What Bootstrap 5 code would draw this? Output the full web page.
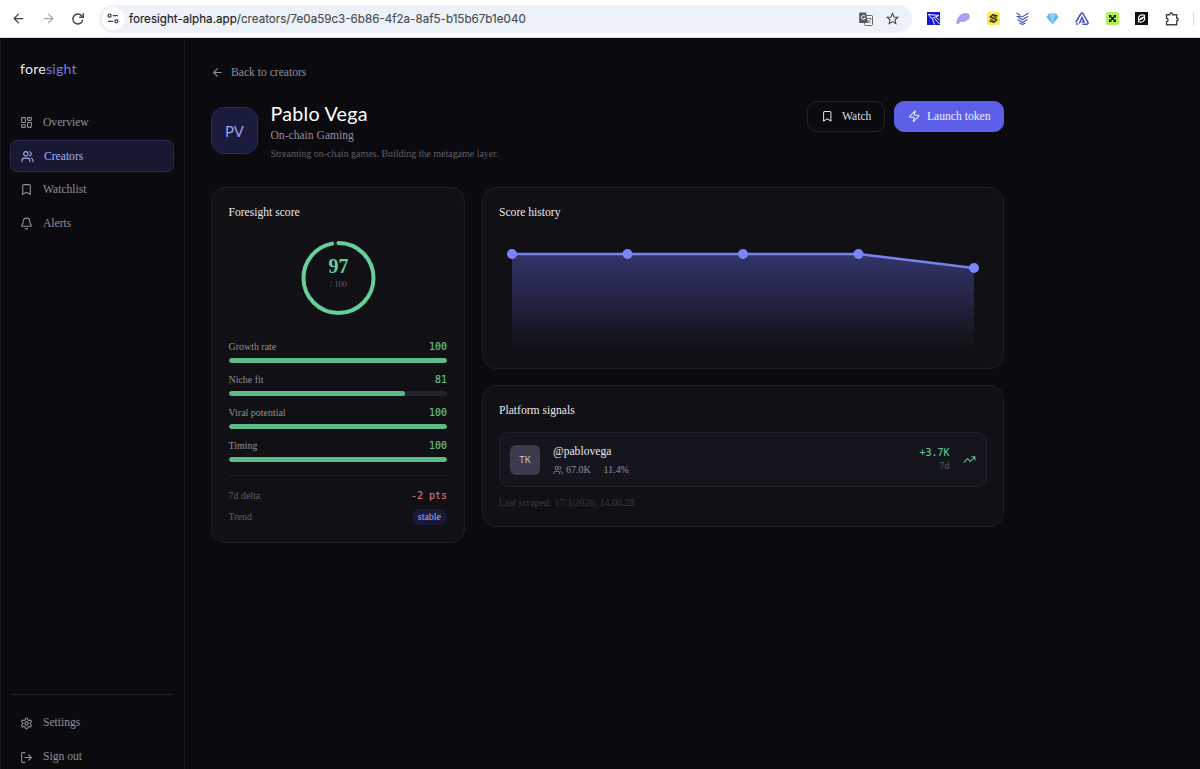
<!DOCTYPE html>
<html lang="en">
<head>
<meta charset="utf-8">
<title>Foresight – Pablo Vega</title>
<link href="https://cdn.jsdelivr.net/npm/bootstrap@5.3.0/dist/css/bootstrap.min.css" rel="stylesheet">
<style>
:root{--line:#1d1d22;--mut:#8f8f99;--dim:#5f5f69;--ind:#818cf8;--grn:#5fc48e}
body{background:#0b0b0f;color:#e8e8ec;font:11.6px/16px "Liberation Serif",serif;height:769px;overflow:hidden}
svg{display:block;flex:none}
.ico{fill:none;stroke:currentColor;stroke-width:2;stroke-linecap:round;stroke-linejoin:round}
.geo{font-family:Lato,"Open Sans",sans-serif}
.mono{font-family:"DejaVu Sans Mono","Liberation Mono",monospace;font-size:9.95px;-webkit-text-stroke:.15px}
.chrome{height:38px;background:#fff;border-bottom:1px solid #d5d7da;color:#474747;padding-left:11px}
.omni{width:813px;height:28px;border-radius:14px;background:#edf1f8;margin-left:14px;padding:0 13px 0 3px}
.tune{width:23px;height:23px;border-radius:50%;background:#fff}
.url{font:11.63px/16px Inter,sans-serif;color:#4a4c50;margin-left:4.5px;-webkit-text-stroke:.15px}
.url b{font-weight:400;color:#1f2023}
.exts{gap:16.5px;margin-left:15px}
.shell{height:731px}
.side{width:185px;border-right:1px solid #17171b;border-left:1px solid #17171b;padding:0 10px 0 9px}
.brand{font-size:14.2px;line-height:18px;margin:22px 0 0 10px;letter-spacing:.2px}
.brand span{color:#7379e0}
.side .nav-link{height:32px;border:1px solid transparent;border-radius:7px;padding:1px 9px 0;gap:10px;color:var(--mut);display:flex;align-items:center}
.side .nav-link.active{background:#181930;border-color:#272950;color:#a3adf9;padding-left:10px}
.side .nav{gap:1.7px;margin-top:28px}
.side .nav span{padding-top:1px}
.foot{border-top:1px solid var(--line);padding-top:11px;height:75px;gap:1px}
.foot .nav-link{height:33px;flex:none}
.content{width:793px;margin-left:26px;padding-top:27px}
.muted{color:var(--mut)}.dimmed{color:var(--dim)}
.small-t{font-size:9.95px}
.avatar{width:47px;height:47px;border-radius:13px;background:#1b1b3d;border:1px solid #2b2c58;color:#9aa2f5;font-size:14.8px}
.name{font-size:19.7px;line-height:24px;color:#fff;letter-spacing:.25px}
.act{font-size:11.6px;line-height:16px;border-radius:10px;padding:0;height:31px;gap:9px;border-width:1px}
.act.watch{width:78px;border-color:#232329;color:#dcdce2}
.act.launch{width:110px;background:#5d5fe9;border-color:#5d5fe9;color:#eeeefe}
.panel{background:#111115;border:1px solid var(--line);border-radius:14px;padding:17px 16.5px}
.meter{height:5px;border-radius:3px;background:#24242e}
.meter .progress-bar{background:#5dbc8a;border-radius:3px}
.metric{height:33px}
.grn{color:var(--grn)}
.stable{background:#1a1a38;color:#a3adf9;border-radius:8px;padding:0 6px;height:16px}
.signal{height:55px;border:1px solid #1f2028;border-radius:9px;background:#15161d;padding:0 10px 0 10px}
.tk{width:30px;height:30px;border-radius:6px;background:#3c3a4c;color:#b9b8c5;font:500 9px/30px Inter,sans-serif;text-align:center}
</style>
</head>
<body>
<svg width="0" height="0" class="position-absolute">
<symbol id="i-left" viewBox="0 0 24 24"><path d="m12 19-7-7 7-7M19 12H5"/></symbol>
<symbol id="i-users" viewBox="0 0 24 24"><path d="M16 21v-2a4 4 0 0 0-4-4H6a4 4 0 0 0-4 4v2"/><circle cx="9" cy="7" r="4"/><path d="M22 21v-2a4 4 0 0 0-3-3.870M16 3.130a4 4 0 0 1 0 7.750"/></symbol>
<symbol id="i-mark" viewBox="0 0 24 24"><path d="m19 21-7-4-7 4V5a2 2 0 0 1 2-2h10a2 2 0 0 1 2 2z"/></symbol>
</svg>

<header class="chrome d-flex align-items-center">
  <svg class="ico" width="15" height="15" style="color:#444"><use href="#i-left"/></svg>
  <svg class="ico" width="15" height="15" viewBox="0 0 24 24" style="color:#a9a9a9;margin-left:15px"><path d="M5 12h14M12 5l7 7-7 7"/></svg>
  <svg class="ico" width="14" height="14" viewBox="0 0 24 24" style="color:#444;margin-left:14.500px;stroke-width:2.400"><path d="M20 14a8.500 8.500 0 1 1-1.800-7.500L21 9"/><path d="M21 3v6h-6"/></svg>
  <div class="omni d-flex align-items-center">
    <div class="tune d-flex align-items-center justify-content-center">
      <svg width="12" height="11" viewBox="0 0 12 11" fill="none" stroke="#444" stroke-width="1.300"><circle cx="2.600" cy="2.700" r="1.500"/><path d="M5.800 2.700h5M1 8.300h5"/><circle cx="9.400" cy="8.300" r="1.500"/></svg>
    </div>
    <div class="url"><b>foresight-alpha.app</b>/creators/7e0a59c3-6b86-4f2a-8af5-b15b67b1e040</div>
    <div class="ms-auto d-flex align-items-center" style="gap:13px">
      <svg width="14" height="14" viewBox="0 0 14 14"><rect x="5.500" y="3.500" width="8" height="10" rx="1" fill="#fff" stroke="#666"/><path d="M7.500 6.500h5M10 5.500v1M12 6.500c-.6 2-2 3.500-3.500 4.500M8.500 8c.8 1.500 2 2.600 3.500 3.300" stroke="#666" stroke-width=".8" fill="none"/><path d="M1 .5h6L9 11H1a.8.8 0 0 1-.8-.8V1.300A.8.800 0 0 1 1 .5z" fill="#55585c"/><path d="M6 4.200A2 2 0 1 0 6.300 6H4.500" stroke="#fff" fill="none"/></svg>
      <svg width="13" height="13" viewBox="0 0 24 24" class="ico" style="color:#444;stroke-linejoin:miter"><path d="m12 2.500 2.900 6.600 7.100.6-5.400 4.700 1.600 7-6.200-3.700-6.200 3.700 1.600-7L2 9.700l7.100-.6z"/></svg>
    </div>
  </div>
  <div class="exts d-flex align-items-center">
    <svg width="13" height="13" viewBox="0 0 13 13"><path d="M0 0h13v13H0z" fill="#1517d8"/><path d="M1.500 2.500 12 3.500 4.500 6.500zM5.500 7l2 5.500M7.500 6.500l5 5.500M9 5.500l3.500 2.500" stroke="#fff" stroke-width="1" fill="none"/></svg>
    <svg width="14" height="13" viewBox="0 0 14 13"><path d="M.3 11C1 5 4.500 1.300 9.500 1c3-.1 4.600 1.600 4.300 4-.3 2.300-1.800 3.500-3.500 3.200-.6 2-2 1.800-2.500.5-.7 1.800-2 2.200-2.800.6C4 11 2.500 12.500.8 12z" fill="#ab9fee"/></svg>
    <svg width="13" height="13" viewBox="0 0 13 13"><rect width="13" height="13" rx="2.500" fill="#fce94b"/><path d="M10.300 3.800 6 2.800 3.300 4.800 9.700 8 7 10.200 2.700 9.200M10 5.500 6.500 4.500M3 7.500l3.500 1" stroke="#222" stroke-width="1.300" fill="none"/></svg>
    <svg width="13" height="13" viewBox="0 0 13 13" fill="none" stroke="#4355bd" stroke-width="1.100"><path d="m.5 1 4 2.500M12.500 1l-6 3.800L.5 4.500M.8 4.200l5.700 3.600 5.700-3.600M1.500 7.500l5 3 5-3M3.500 11l3 1.500 3-1.500"/></svg>
    <svg width="13" height="13" viewBox="0 0 13 13"><path d="M3 1.500h7L12.500 5l-6 7.500L.5 5z" fill="#61b7ef"/><path d="M3 1.500 4.500 5l2 7.500 2-7.500L10 1.500z" fill="#91d1f8"/></svg>
    <svg width="14" height="13" viewBox="0 0 14 13" fill="none" stroke="#4550cf" stroke-width="1.500" stroke-linecap="round"><path d="M1 10 5.800 1.800q1.200-1.500 2.400 0l4.800 8.700q.4 1.500-1 1.700H8M4.500 11 7 5.500l2 4.500H7M1.500 12h1"/></svg>
    <svg width="13" height="13" viewBox="0 0 13 13"><rect width="13" height="13" rx="2.500" fill="#b0ee55"/><path d="M3 3h2.500v2h2V3H10v2.500H8v2h2V10H7.500V8h-2v2H3V7.500h2v-2H3z" fill="#182010"/></svg>
    <svg width="13" height="13" viewBox="0 0 13 13"><path d="M0 0h13v13H0z" fill="#101010"/><path d="M3.800 8.500C2.300 4.500 5.500 2 9.500 3.300L9 5 4.800 6.800M9.300 4.500c1.500 4-1.800 6.500-5.800 5.200L4 8l4.200-1.800" stroke="#fff" stroke-width="1.100" fill="none"/></svg>
    <svg width="14" height="14" viewBox="0 0 14 14" fill="none" stroke="#444" stroke-width="1.400"><path d="M1.500 2.700h3.200c0-2.200 3-2.200 3 0h4v3.500c2 0 2 2.700 0 2.700v3.800H1.500V9.500c2 0 2-3.200 0-3.200z"/></svg>
    <span style="width:1px;height:14px;background:#d5def0;margin-left:-2px"></span>
  </div>
</header>

<div class="shell d-flex">
  <aside class="side d-flex flex-column">
    <div class="brand geo">fore<span>sight</span></div>
    <nav class="nav flex-column flex-nowrap">
      <a class="nav-link"><svg class="ico" width="13" height="13" viewBox="0 0 24 24"><rect x="3" y="3" width="7" height="9" rx="1"/><rect x="14" y="3" width="7" height="5" rx="1"/><rect x="14" y="12" width="7" height="9" rx="1"/><rect x="3" y="16" width="7" height="5" rx="1"/></svg><span>Overview</span></a>
      <a class="nav-link active"><svg class="ico" width="13" height="13"><use href="#i-users"/></svg><span>Creators</span></a>
      <a class="nav-link"><svg class="ico" width="13" height="13"><use href="#i-mark"/></svg><span>Watchlist</span></a>
      <a class="nav-link"><svg class="ico" width="13" height="13" viewBox="0 0 24 24"><path d="M10.268 21a2 2 0 0 0 3.464 0M3.262 15.326A1 1 0 0 0 4 17h16a1 1 0 0 0 .74-1.673C19.410 13.956 18 12.499 18 8A6 6 0 0 0 6 8c0 4.499-1.411 5.956-2.738 7.326"/></svg><span>Alerts</span></a>
    </nav>
    <div class="foot d-flex flex-column mt-auto">
      <a class="nav-link"><svg class="ico" width="13" height="13" viewBox="0 0 24 24"><path d="M12.220 2h-.44a2 2 0 0 0-2 2v.18a2 2 0 0 1-1 1.730l-.43.25a2 2 0 0 1-2 0l-.15-.08a2 2 0 0 0-2.730.73l-.22.38a2 2 0 0 0 .73 2.730l.15.1a2 2 0 0 1 1 1.720v.51a2 2 0 0 1-1 1.740l-.15.09a2 2 0 0 0-.73 2.730l.22.38a2 2 0 0 0 2.730.73l.15-.08a2 2 0 0 1 2 0l.43.25a2 2 0 0 1 1 1.730V20a2 2 0 0 0 2 2h.44a2 2 0 0 0 2-2v-.18a2 2 0 0 1 1-1.730l.43-.25a2 2 0 0 1 2 0l.15.08a2 2 0 0 0 2.730-.73l.22-.39a2 2 0 0 0-.73-2.730l-.15-.08a2 2 0 0 1-1-1.740v-.5a2 2 0 0 1 1-1.740l.15-.09a2 2 0 0 0 .73-2.730l-.22-.38a2 2 0 0 0-2.730-.73l-.15.08a2 2 0 0 1-2 0l-.43-.25a2 2 0 0 1-1-1.730V4a2 2 0 0 0-2-2z"/><circle cx="12" cy="12" r="3"/></svg>Settings</a>
      <a class="nav-link"><svg class="ico" width="13" height="13" viewBox="0 0 24 24"><path d="M9 21H5a2 2 0 0 1-2-2V5a2 2 0 0 1 2-2h4M16 17l5-5-5-5M21 12H9"/></svg>Sign out</a>
    </div>
  </aside>

  <main class="content">
    <a class="d-flex align-items-center muted text-decoration-none" style="gap:7px"><svg class="ico" width="13" height="13" style="margin-top:-1px"><use href="#i-left"/></svg>Back to creators</a>
    <div class="d-flex align-items-start" style="height:84px;margin-top:21px;margin-bottom:1px">
      <div class="avatar geo d-flex align-items-center justify-content-center" style="margin-top:5px">PV</div>
      <div style="margin-left:12.500px">
        <div class="name geo">Pablo Vega</div>
        <div class="muted" style="margin-top:2px">On-chain Gaming</div>
        <div class="dimmed small-t" style="margin-top:2px">Streaming on-chain games. Building the metagame layer.</div>
      </div>
      <div class="ms-auto d-flex" style="gap:9px;margin-top:-1px">
        <button class="btn act watch d-flex align-items-center justify-content-center"><svg class="ico" width="12.500" height="12.500"><use href="#i-mark"/></svg>Watch</button>
        <button class="btn act launch d-flex align-items-center justify-content-center" style="gap:7px"><svg class="ico" width="12.500" height="12.500" viewBox="0 0 24 24"><path d="M4 14a1 1 0 0 1-.78-1.630l9.900-10.200a.5.500 0 0 1 .86.460l-1.920 6.020A1 1 0 0 0 13 10h7a1 1 0 0 1 .78 1.630l-9.900 10.200a.5.500 0 0 1-.86-.460l1.920-6.020A1 1 0 0 0 11 14z"/></svg>Launch token</button>
      </div>
    </div>

    <div class="d-flex align-items-start" style="gap:17px">
      <section class="panel" style="width:253.500px;height:356px">
        <div>Foresight score</div>
        <svg width="218" height="76" viewBox="0 0 218 76" style="margin-top:19px"><circle cx="109.500" cy="38" r="35" fill="none" stroke="#1e1e26" stroke-width="4"/><circle cx="109.500" cy="38" r="35" fill="none" stroke="#65ce9b" stroke-width="4" stroke-linecap="round" pathLength="100" stroke-dasharray="97 3" transform="rotate(-90 109.500 38)"/><text x="109.500" y="33" text-anchor="middle" font-size="20" font-weight="700" fill="#65ce9b">97</text><text x="109.500" y="46.500" text-anchor="middle" font-size="8.300" fill="#5f5f69">/ 100</text></svg>
        <div style="margin-top:23px">
          <div class="metric"><div class="d-flex justify-content-between small-t muted"><span>Growth rate</span><span class="mono grn">100</span></div><div class="progress meter" style="margin-top:3px"><div class="progress-bar" style="width:100%"></div></div></div>
          <div class="metric"><div class="d-flex justify-content-between small-t muted"><span>Niche fit</span><span class="mono grn">81</span></div><div class="progress meter" style="margin-top:3px"><div class="progress-bar" style="width:81%"></div></div></div>
          <div class="metric"><div class="d-flex justify-content-between small-t muted"><span>Viral potential</span><span class="mono grn">100</span></div><div class="progress meter" style="margin-top:3px"><div class="progress-bar" style="width:100%"></div></div></div>
          <div class="metric"><div class="d-flex justify-content-between small-t muted"><span>Timing</span><span class="mono grn">100</span></div><div class="progress meter" style="margin-top:3px"><div class="progress-bar" style="width:100%"></div></div></div>
        </div>
        <div class="small-t dimmed" style="border-top:1px solid var(--line);margin-top:4px;padding-top:12px">
          <div class="d-flex justify-content-between"><span>7d delta</span><span class="mono" style="color:#d8716c">-2 pts</span></div>
          <div class="d-flex justify-content-between" style="margin-top:5px"><span>Trend</span><span class="stable">stable</span></div>
        </div>
      </section>
      <div style="width:522.500px">
        <section class="panel" style="height:182px">
          <div>Score history</div>
          <svg width="488" height="116" viewBox="0 0 488 116" style="margin-top:14px">
            <defs><linearGradient id="fade" gradientUnits="userSpaceOnUse" x1="0" y1="19" x2="0" y2="114"><stop offset="0" stop-color="#6b6ff5" stop-opacity=".38"/><stop offset="1" stop-color="#6b6ff5" stop-opacity="0"/></linearGradient></defs>
            <path d="M13 19h346.500l115.500 14v83H13z" fill="url(#fade)"/>
            <path d="M13 19h346.500l115.500 14" fill="none" stroke="#797fec" stroke-width="2.600"/>
            <g fill="#7c85f7"><circle cx="13" cy="19" r="5"/><circle cx="128.500" cy="19" r="5"/><circle cx="244" cy="19" r="5"/><circle cx="359.500" cy="19" r="5"/><circle cx="475" cy="33" r="5"/></g>
          </svg>
        </section>
        <section class="panel" style="height:142px;margin-top:16px">
          <div>Platform signals</div>
          <div class="signal d-flex align-items-center" style="margin-top:13px">
            <div class="tk">TK</div>
            <div style="margin-left:13px;padding-top:2px">
              <div>@pablovega</div>
              <div class="d-flex align-items-center small-t muted" style="margin-top:2px"><svg class="ico" width="10" height="10"><use href="#i-users"/></svg><span style="margin-left:3px">67.0K</span><span style="margin-left:13px">11.4%</span></div>
            </div>
            <div class="ms-auto text-end small-t dimmed"><div class="mono grn" style="line-height:13px">+3.7K</div><div style="line-height:14px">7d</div></div>
            <svg class="ico grn" width="13" height="13" viewBox="0 0 24 24" style="margin-left:13px"><path d="m22 7-8.500 8.500-5-5L2 17M16 7h6v6"/></svg>
          </div>
          <div class="small-t" style="color:#383840;margin-top:8px">Last scraped: 17/3/2026, 14.00.28</div>
        </section>
      </div>
    </div>
  </main>
</div>
<script src="https://cdn.jsdelivr.net/npm/bootstrap@5.3.0/dist/js/bootstrap.bundle.min.js"></script>
</body>
</html>
